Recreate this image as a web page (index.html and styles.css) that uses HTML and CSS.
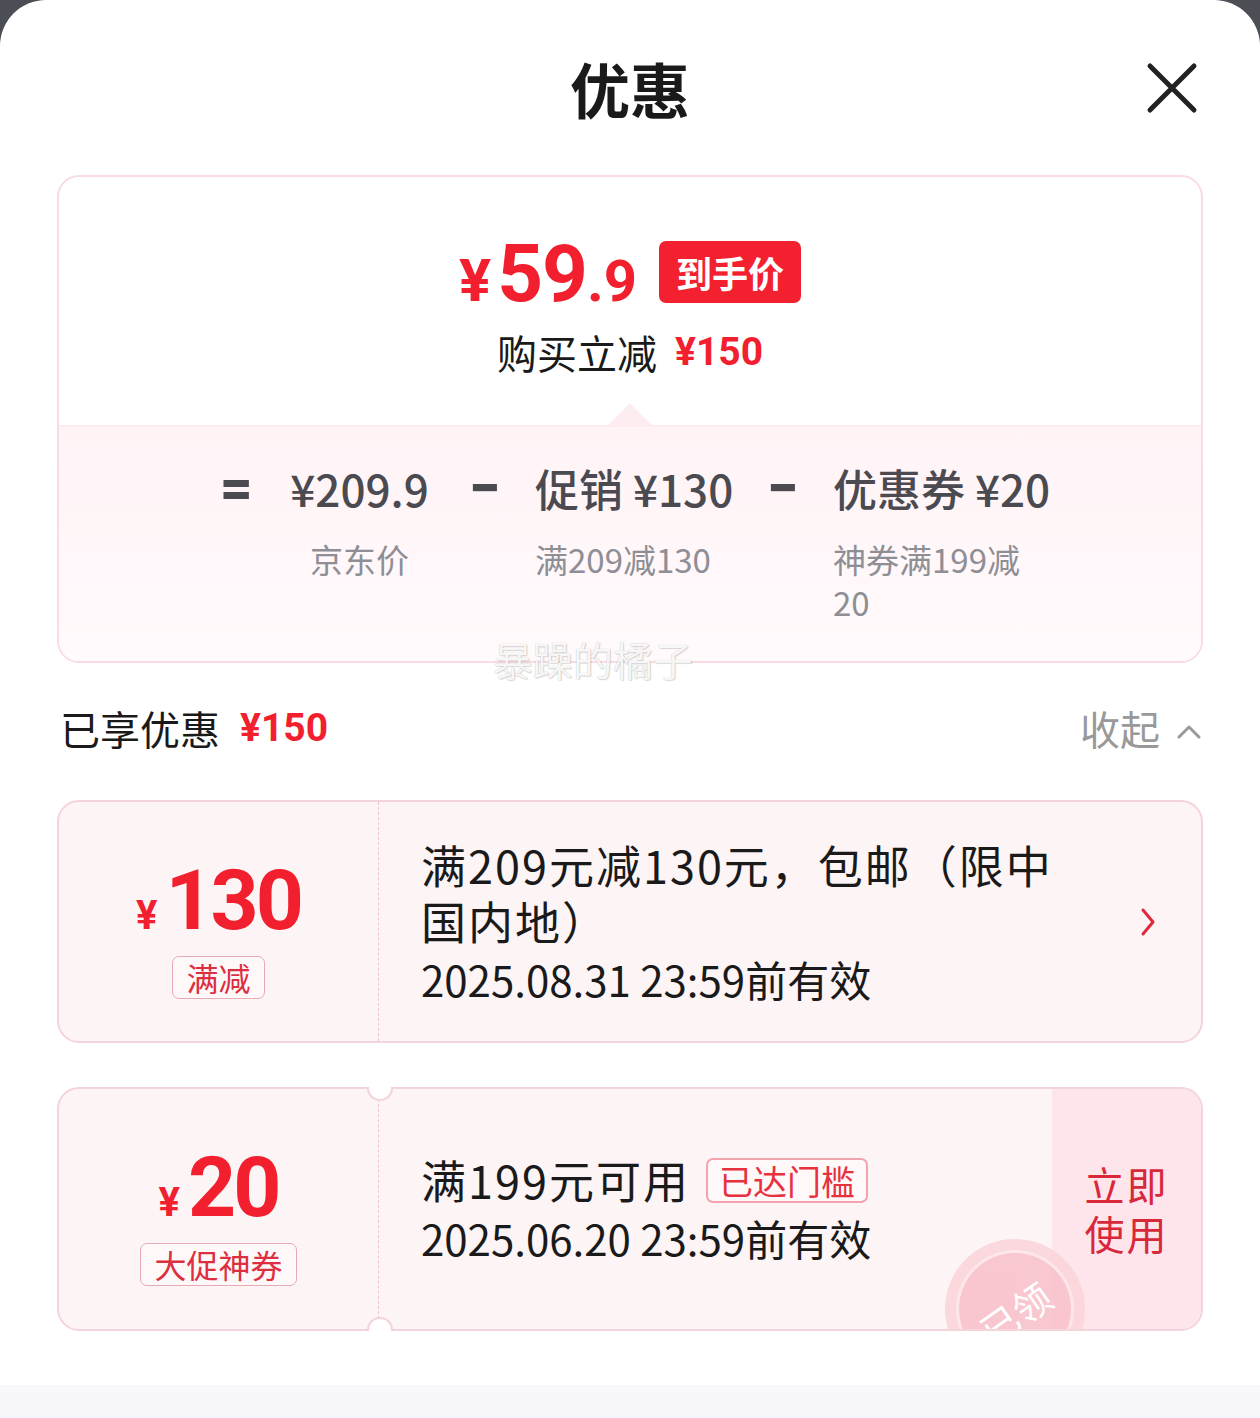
FILE: index.html
```html
<!DOCTYPE html>
<html lang="zh-CN">
<head>
<meta charset="utf-8">
<title>优惠</title>
<link rel="stylesheet" href="styles.css">
</head>
<body>
<div class="sheet">
  <header class="hd">
    <div class="hd-side"></div>
    <h1 class="title">优惠</h1>
    <div class="hd-side hd-close">
      <svg width="52" height="52" viewBox="0 0 52 52"><path d="M4 4 L48 48 M48 4 L4 48" stroke="#222" stroke-width="5" stroke-linecap="round" fill="none"/></svg>
    </div>
  </header>

  <section class="summary">
    <div class="sum-top">
      <div class="price-row">
        <div class="price"><span class="p-yen">¥</span><span class="p-int">59</span><span class="p-dec">.9</span></div>
        <span class="badge">到手价</span>
      </div>
      <div class="instant">购买立减<span class="red-num">¥150</span></div>
    </div>
    <div class="sum-bottom">
      <div class="calc">
        <span class="op">=</span>
        <span class="val c1">¥209.9</span>
        <span class="op">−</span>
        <span class="val">促销 ¥130</span>
        <span class="op">−</span>
        <span class="val">优惠券 ¥20</span>
        <span></span>
        <span class="sub c1">京东价</span>
        <span></span>
        <span class="sub">满209减130</span>
        <span></span>
        <span class="sub narrow">神券满199减20</span>
      </div>
    </div>
  </section>

  <div class="enjoyed">
    <div class="en-left">已享优惠<span class="red-num">¥150</span></div>
    <div class="en-right">收起<svg width="26" height="16" viewBox="0 0 26 16"><path d="M3 13 L13 3 L23 13" stroke="#9a9a9a" stroke-width="3" fill="none" stroke-linecap="round" stroke-linejoin="round"/></svg></div>
  </div>

  <div class="coupon">
    <div class="cp-left">
      <div class="amt"><span class="amt-yen">¥</span><span class="amt-num">130</span></div>
      <span class="tag">满减</span>
    </div>
    <div class="cp-body">
      <div class="cp-title">满209元减130元，包邮（限中国内地）</div>
      <div class="cp-date">2025.08.31 23:59前有效</div>
    </div>
    <div class="cp-arrow">
      <svg width="18" height="30" viewBox="0 0 18 30"><path d="M4 3 L14 15 L4 27" stroke="#e0283a" stroke-width="3" fill="none" stroke-linecap="round" stroke-linejoin="round"/></svg>
    </div>
  </div>

  <div class="coupon coupon2 notched">
    <div class="cp-left">
      <div class="amt"><span class="amt-yen">¥</span><span class="amt-num">20</span></div>
      <span class="tag">大促神券</span>
    </div>
    <div class="cp-body">
      <div class="cp-title-row"><span class="cp-title-s">满199元可用</span><span class="tag2">已达门槛</span></div>
      <div class="cp-date">2025.06.20 23:59前有效</div>
    </div>
    <div class="cp-action">立即<br>使用</div>
    <div class="stamp-clip">
      <div class="stamp"><div class="stamp-inner"><span>已领</span></div></div>
    </div>
  </div>

  <div class="bottom-band"></div>

  <div class="watermark">暴躁的橘子</div>
</div>
</body>
</html>
```
FILE: styles.css
```css
html, body {
  margin: 0;
  padding: 0;
}
body {
  background: #4b4e55;
  font-family: "Noto Sans CJK SC", "Noto Sans", sans-serif;
  color: #1a1a1a;
}
.sheet {
  width: 1260px;
  height: 1418px;
  background: #fff;
  border-radius: 46px 46px 0 0;
  position: relative;
  display: flex;
  flex-direction: column;
  overflow: hidden;
}

/* header */
.hd {
  height: 175px;
  flex: none;
  display: grid;
  grid-template-columns: 1fr auto 1fr;
  align-items: center;
}
.title {
  margin: 0;
  font-size: 60px;
  font-weight: 700;
  line-height: 1;
  color: #1a1a1a;
}
.hd-close {
  justify-self: end;
  padding-right: 62px;
  display: flex;
}

/* summary card */
.summary {
  margin: 0 57px;
  height: 488px;
  box-sizing: border-box;
  border: 2px solid #f9dbe2;
  border-radius: 22px;
  display: flex;
  flex-direction: column;
  overflow: hidden;
  flex: none;
}
.sum-top {
  height: 248px;
  flex: none;
  display: flex;
  flex-direction: column;
  align-items: center;
}
.price-row {
  margin-top: 62px;
  height: 66px;
  display: flex;
  align-items: center;
  gap: 22px;
}
.price {
  display: flex;
  align-items: baseline;
  color: #f2202e;
  font-family: Roboto, "Liberation Sans", sans-serif;
  font-weight: 700;
  line-height: 1;
  margin-top: 4px;
}
.p-yen { font-size: 60px; margin-right: 6px; }
.p-int { font-size: 80px; letter-spacing: -1px; }
.p-dec { font-size: 58px; }
.badge {
  height: 62px;
  line-height: 62px;
  padding: 0 17px;
  background: #f3212f;
  color: #fff;
  font-size: 36px;
  font-weight: 700;
  border-radius: 7px;
}
.instant {
  margin-top: 22px;
  font-size: 40px;
  line-height: 50px;
  color: #1a1a1a;
  display: flex;
  align-items: center;
}
.red-num {
  color: #f2202e;
  font-family: Roboto, "Liberation Sans", sans-serif;
  font-weight: 700;
  font-size: 39px;
  margin-left: 18px;
}

.sum-bottom {
  flex: 1;
  position: relative;
  border-top: 2px solid #fdebef;
  background: linear-gradient(180deg, #fff3f6 0%, #fffafb 100%);
}
.sum-bottom::before {
  content: "";
  position: absolute;
  left: 50%;
  top: -24px;
  transform: translateX(-50%);
  border-left: 22px solid transparent;
  border-right: 22px solid transparent;
  border-bottom: 22px solid #fdedf1;
}
.calc {
  padding: 33px 0 0 161px;
  display: grid;
  grid-template-columns: 30px 147px 30px 196px 30px 216px;
  column-gap: 36px;
  row-gap: 22px;
  align-items: start;
}
.op {
  font-family: Roboto, "Liberation Sans", sans-serif;
  font-weight: 900;
  font-size: 56px;
  line-height: 56px;
  color: #4a4a50;
  text-align: center;
}
.val {
  font-size: 44px;
  line-height: 56px;
  font-weight: 500;
  color: #4a4a50;
  white-space: nowrap;
}
.sub {
  font-size: 33px;
  line-height: 43px;
  color: #8e8e95;
}
.c1 { text-align: center; }
.narrow { width: 198px; }

/* enjoyed header */
.enjoyed {
  margin-top: 27px;
  height: 76px;
  flex: none;
  padding: 0 58px 0 60px;
  display: flex;
  align-items: center;
  justify-content: space-between;
}
.en-left {
  font-size: 40px;
  color: #1a1a1a;
  display: flex;
  align-items: center;
}
.en-left .red-num { font-size: 39px; margin-left: 20px; }
.en-right {
  font-size: 40px;
  color: #999;
  display: flex;
  align-items: center;
  gap: 16px;
}
.en-right svg { margin-top: 8px; }

/* coupons */
.coupon {
  margin: 34px 57px 0;
  height: 243px;
  flex: none;
  box-sizing: border-box;
  border: 2px solid #f4d3da;
  border-radius: 22px;
  background: #fdf4f6;
  display: flex;
  position: relative;
}
.coupon2 { margin-top: 44px; height: 244px; }
.cp-left {
  width: 320px;
  flex: none;
  box-sizing: border-box;
  border-right: 1px dashed #efc6ce;
  display: flex;
  flex-direction: column;
  align-items: center;
  justify-content: center;
  padding-top: 16px;
}
.amt {
  display: flex;
  align-items: baseline;
  color: #f2202e;
  font-family: Roboto, "Liberation Sans", sans-serif;
  font-weight: 700;
  line-height: 80px;
}
.amt-yen { font-size: 40px; margin-right: 8px; }
.amt-num { font-size: 84px; letter-spacing: -3px; }
.tag {
  margin-top: 0;
  border: 1px solid #e6aab4;
  border-radius: 7px;
  padding: 0 13px;
  font-size: 32px;
  line-height: 41px;
  color: #dc2f3f;
  background: rgba(255, 255, 255, 0.35);
}
.cp-body {
  flex: 1;
  padding-left: 42px;
  display: flex;
  flex-direction: column;
  justify-content: center;
}
.cp-title {
  width: 665px;
  font-size: 45px;
  line-height: 56px;
  letter-spacing: 2px;
  color: #1a1a1a;
}
.cp-date {
  font-size: 42px;
  line-height: 56px;
  color: #1a1a1a;
  margin-top: 2px;
}
.cp-arrow {
  flex: none;
  padding-right: 44px;
  display: flex;
  align-items: center;
}
.cp-title-row {
  display: flex;
  align-items: center;
  gap: 16px;
  height: 56px;
}
.cp-title-s {
  font-size: 45px;
  line-height: 56px;
  letter-spacing: 2px;
}
.tag2 {
  border: 2px solid #f2a3ae;
  border-radius: 7px;
  padding: 0 11px;
  font-size: 34px;
  line-height: 41px;
  color: #e8313f;
  background: rgba(255, 255, 255, 0.4);
}
.cp-action {
  width: 149px;
  flex: none;
  background: #fde5eb;
  border-radius: 0 20px 20px 0;
  display: flex;
  align-items: center;
  justify-content: center;
  text-align: center;
  font-size: 40px;
  line-height: 49px;
  color: #d9283a;
  letter-spacing: 2px;
}
.notched::before,
.notched::after {
  content: "";
  position: absolute;
  left: 308px;
  width: 22px;
  height: 12px;
  background: #fff;
  border: 2px solid #f4d3da;
  z-index: 2;
}
.notched::before {
  top: -2px;
  border-top: 0;
  border-radius: 0 0 13px 13px;
}
.notched::after {
  bottom: -2px;
  border-bottom: 0;
  border-radius: 13px 13px 0 0;
}
.stamp-clip {
  position: absolute;
  inset: 0;
  overflow: hidden;
  border-radius: 20px;
  pointer-events: none;
}
.stamp {
  position: absolute;
  left: 886px;
  top: 150px;
  width: 140px;
  height: 140px;
  border-radius: 50%;
  background: #fbd6dd;
  display: flex;
  align-items: center;
  justify-content: center;
  opacity: 0.95;
}
.stamp-inner {
  width: 112px;
  height: 112px;
  border-radius: 50%;
  background: #f9c4ce;
  box-shadow: 0 0 0 3px #fde6ea;
  display: flex;
  align-items: center;
  justify-content: center;
}
.stamp-inner span {
  color: #fff;
  font-size: 38px;
  transform: rotate(-35deg);
  margin-top: 6px;
}

.bottom-band {
  margin-top: auto;
  height: 33px;
  flex: none;
  background: linear-gradient(180deg, #f8f7fb 0%, #f5f6f9 100%);
}

.watermark {
  position: absolute;
  left: 493px;
  top: 634px;
  font-size: 40px;
  line-height: 50px;
  color: rgba(255, 255, 255, 0.92);
  text-shadow: 0 0 1px rgba(0, 0, 0, 0.28), 1px 1px 1px rgba(0, 0, 0, 0.12);
  pointer-events: none;
}
```
